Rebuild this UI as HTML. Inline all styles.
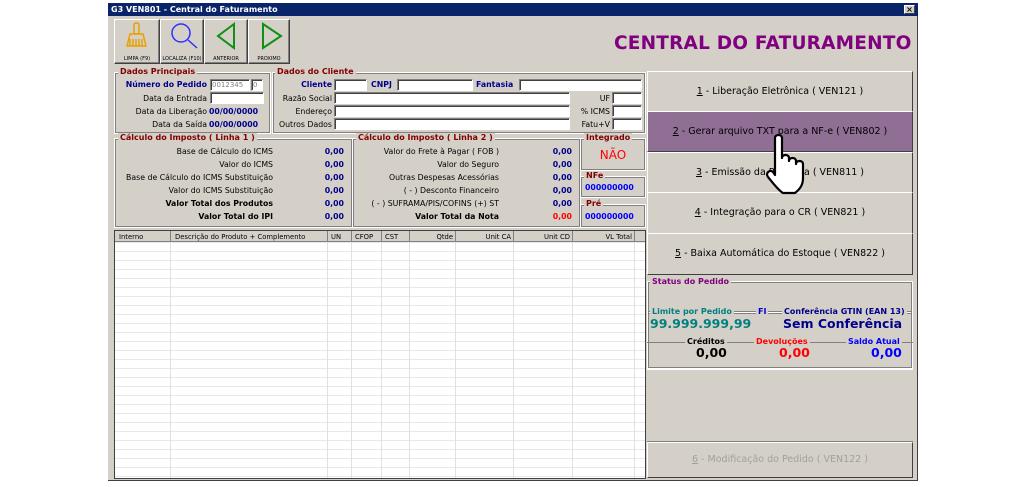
<!DOCTYPE html><html><head><meta charset="utf-8"><style>
*{margin:0;padding:0;box-sizing:border-box}
body{width:1025px;height:487px;background:#fff;position:relative;overflow:hidden;font-family:"DejaVu Sans","Liberation Sans",sans-serif;font-size:8px;color:#000}
.a{position:absolute}
.win{left:108px;top:3px;width:810px;height:478px;background:#d4d0c8;border-right:1px solid #404040;border-bottom:1px solid #404040}
.tb{left:108px;top:3px;width:810px;height:13px;background:#0a246a;color:#fff;font-weight:bold;font-size:8px;line-height:13px;padding-left:3px}
.btn{background:#d4d0c8;border:1px solid;border-color:#fff #404040 #404040 #fff;box-shadow:inset -1px -1px #808080}
.gb{border:1px solid #fff;outline:1px solid #808080;outline-offset:-2px}
.gl{background:#d4d0c8;font-weight:bold;padding:0 2px;font-size:8px;line-height:9px}
.r{text-align:right}
.in{background:#fff;border:1px solid #808080;border-right-color:#fff;border-bottom-color:#fff;box-shadow:inset 1px 1px #404040}
.lbl{font-size:7.8px;line-height:10px;white-space:nowrap}
.v{font-weight:bold;color:#00008b}
.rb{background:#d4d0c8;border:1px solid;border-color:#fff #404040 #404040 #fff;font-size:9.5px;color:#000;text-align:center;font-family:"DejaVu Sans",sans-serif}
</style></head><body>
<div class="a win"></div>
<div class="a tb">G3 VEN801 - Central do Faturamento</div>
<div class="a" style="left:904px;top:5px;width:11px;height:9px;background:#d4d0c8;border:1px solid;border-color:#fff #404040 #404040 #fff;font-size:8px;line-height:7px;text-align:center;font-weight:bold">×</div>

<!-- toolbar -->
<div class="a btn" style="left:114px;top:19px;width:46px;height:45px"></div>
<div class="a btn" style="left:160px;top:19px;width:44px;height:45px"></div>
<div class="a btn" style="left:204px;top:19px;width:44px;height:45px"></div>
<div class="a btn" style="left:248px;top:19px;width:42px;height:45px"></div>
<svg class="a" style="left:114px;top:19px" width="176" height="45">
<g fill="none" stroke="#e8a000" stroke-width="1.5"><rect x="20" y="4" width="5" height="11" rx="2"/><path d="M16 15h13l3 12H13z"/><path d="M16 20v7M19 20v7M22 20v7M25 20v7M28 20v7"/></g>
<circle cx="67" cy="14" r="9" fill="none" stroke="#3030ff" stroke-width="1.5"/><path d="M74 21l9 8" stroke="#3030ff" stroke-width="1.5"/>
<path d="M120 5L104 17L120 29Z" fill="none" stroke="#109010" stroke-width="2"/>
<path d="M149 5L167 17L149 29Z" fill="none" stroke="#109010" stroke-width="2"/>
<g font-size="5" font-family="DejaVu Sans" text-anchor="middle"><text x="23" y="41">LIMPA (F9)</text><text x="68" y="41">LOCALIZA (F10)</text><text x="112" y="41">ANTERIOR</text><text x="155" y="41">PROXIMO</text></g>
</svg>
<div class="a" style="left:614px;top:33px;font-size:18.5px;font-weight:bold;color:#800080;font-family:'DejaVu Sans',sans-serif;letter-spacing:0.2px">CENTRAL DO FATURAMENTO</div>

<!-- Dados Principais -->
<div class="a gb" style="left:114px;top:72px;width:157px;height:62px"></div>
<div class="a gl" style="left:118px;top:67px;color:#800000">Dados Principais</div>
<div class="a lbl r v" style="left:110px;top:80px;width:97px">Número do Pedido</div>
<div class="a in" style="left:210px;top:79px;width:40px;height:12px;font-size:7px;color:#808080;padding-left:1px;line-height:10px">0012345</div>
<div class="a in" style="left:251px;top:79px;width:12px;height:12px;font-size:7px;color:#808080;padding-left:1px;line-height:10px">0</div>
<div class="a lbl r" style="left:110px;top:94px;width:97px">Data da Entrada</div>
<div class="a in" style="left:210px;top:92px;width:54px;height:12px"></div>
<div class="a lbl r" style="left:110px;top:107px;width:97px">Data da Liberação</div>
<div class="a lbl v" style="left:209px;top:107px">00/00/0000</div>
<div class="a lbl r" style="left:110px;top:120px;width:97px">Data da Saída</div>
<div class="a lbl v" style="left:209px;top:120px">00/00/0000</div>

<!-- Dados do Cliente -->
<div class="a gb" style="left:272px;top:72px;width:374px;height:62px"></div>
<div class="a gl" style="left:275px;top:67px;color:#800000">Dados do Cliente</div>
<div class="a lbl r v" style="left:272px;top:80px;width:60px">Cliente</div>
<div class="a in" style="left:334px;top:79px;width:33px;height:12px"></div>
<div class="a lbl v" style="left:371px;top:80px">CNPJ</div>
<div class="a in" style="left:397px;top:79px;width:76px;height:12px"></div>
<div class="a lbl v" style="left:476px;top:80px">Fantasia</div>
<div class="a in" style="left:519px;top:79px;width:123px;height:12px"></div>
<div class="a lbl r" style="left:272px;top:94px;width:60px">Razão Social</div>
<div class="a in" style="left:334px;top:92px;width:236px;height:12px"></div>
<div class="a lbl r" style="left:272px;top:107px;width:60px">Endereço</div>
<div class="a in" style="left:334px;top:105px;width:236px;height:12px"></div>
<div class="a lbl r" style="left:272px;top:120px;width:60px">Outros Dados</div>
<div class="a in" style="left:334px;top:118px;width:236px;height:12px"></div>
<div class="a lbl r" style="left:570px;top:94px;width:40px">UF</div>
<div class="a in" style="left:612px;top:92px;width:30px;height:12px"></div>
<div class="a lbl r" style="left:570px;top:107px;width:40px">% ICMS</div>
<div class="a in" style="left:612px;top:105px;width:30px;height:12px"></div>
<div class="a lbl r" style="left:570px;top:120px;width:40px">Fatu+V</div>
<div class="a in" style="left:612px;top:118px;width:30px;height:12px"></div>

<!-- Calculo 1 -->
<div class="a gb" style="left:114px;top:138px;width:239px;height:90px"></div>
<div class="a gl" style="left:118px;top:133px;color:#800000">Cálculo do Imposto ( Linha 1 )</div>
<div class="a lbl r" style="left:110px;top:147px;width:163px">Base de Cálculo do ICMS</div>
<div class="a lbl r" style="left:110px;top:160px;width:163px">Valor do ICMS</div>
<div class="a lbl r" style="left:110px;top:173px;width:163px">Base de Cálculo do ICMS Substituição</div>
<div class="a lbl r" style="left:110px;top:186px;width:163px">Valor do ICMS Substituição</div>
<div class="a lbl r" style="left:110px;top:199px;width:163px;font-weight:bold">Valor Total dos Produtos</div>
<div class="a lbl r" style="left:110px;top:212px;width:163px;font-weight:bold">Valor Total do IPI</div>
<div class="a lbl r v" style="left:300px;top:147px;width:44px">0,00</div>
<div class="a lbl r v" style="left:300px;top:160px;width:44px">0,00</div>
<div class="a lbl r v" style="left:300px;top:173px;width:44px">0,00</div>
<div class="a lbl r v" style="left:300px;top:186px;width:44px">0,00</div>
<div class="a lbl r v" style="left:300px;top:199px;width:44px">0,00</div>
<div class="a lbl r v" style="left:300px;top:212px;width:44px">0,00</div>

<!-- Calculo 2 -->
<div class="a gb" style="left:352px;top:138px;width:229px;height:90px"></div>
<div class="a gl" style="left:356px;top:133px;color:#800000">Cálculo do Imposto ( Linha 2 )</div>
<div class="a lbl r" style="left:346px;top:147px;width:153px">Valor do Frete à Pagar ( FOB )</div>
<div class="a lbl r" style="left:346px;top:160px;width:153px">Valor do Seguro</div>
<div class="a lbl r" style="left:346px;top:173px;width:153px">Outras Despesas Acessórias</div>
<div class="a lbl r" style="left:346px;top:186px;width:153px">( - ) Desconto Financeiro</div>
<div class="a lbl r" style="left:346px;top:199px;width:153px">( - ) SUFRAMA/PIS/COFINS (+) ST</div>
<div class="a lbl r" style="left:346px;top:212px;width:153px;font-weight:bold">Valor Total da Nota</div>
<div class="a lbl r v" style="left:529px;top:147px;width:43px">0,00</div>
<div class="a lbl r v" style="left:529px;top:160px;width:43px">0,00</div>
<div class="a lbl r v" style="left:529px;top:173px;width:43px">0,00</div>
<div class="a lbl r v" style="left:529px;top:186px;width:43px">0,00</div>
<div class="a lbl r v" style="left:529px;top:199px;width:43px">0,00</div>
<div class="a lbl r v" style="left:529px;top:212px;width:43px;color:#f00">0,00</div>

<!-- Integrado -->
<div class="a gb" style="left:580px;top:138px;width:66px;height:33px"></div>
<div class="a gl" style="left:584px;top:133px;color:#800000">Integrado</div>
<div class="a" style="left:580px;top:148px;width:66px;text-align:center;color:#f00;font-size:12px">NÃO</div>
<div class="a gb" style="left:580px;top:176px;width:66px;height:22px"></div>
<div class="a gl" style="left:584px;top:171px;color:#800000">NFe</div>
<div class="a lbl v" style="left:585px;top:183px;color:#0000ff">000000000</div>
<div class="a gb" style="left:580px;top:204px;width:66px;height:24px"></div>
<div class="a gl" style="left:584px;top:199px;color:#800000">Pré</div>
<div class="a lbl v" style="left:585px;top:212px;color:#0000ff">000000000</div>

<!-- grid -->
<div class="a" style="left:114px;top:230px;width:532px;height:249px;background:#fff;border:1px solid #404040;
background-image:linear-gradient(#e8e8e8 1px,transparent 1px);background-size:100% 9px;background-position:0 11px"></div>
<svg class="a" style="left:115px;top:231px" width="530" height="247">
<rect width="530" height="11" fill="#d4d0c8"/>
<g stroke="#e0e0e0"><path d="M55.5 11V247M212.5 11V247M236.5 11V247M266.5 11V247M294.5 11V247M340.5 11V247M398.5 11V247M457.5 11V247M519.5 11V247"/></g>
<g stroke="#808080"><path d="M55.5 0V11M212.5 0V11M236.5 0V11M266.5 0V11M294.5 0V11M340.5 0V11M398.5 0V11M457.5 0V11M519.5 0V11M0 10.5H530"/></g>
<g font-size="6.8" font-family="DejaVu Sans"><text x="4" y="8">Interno</text><text x="60" y="8">Descrição do Produto + Complemento</text><text x="216" y="8">UN</text><text x="240" y="8">CFOP</text><text x="270" y="8">CST</text>
<g text-anchor="end"><text x="338" y="8">Qtde</text><text x="396" y="8">Unit CA</text><text x="455" y="8">Unit CD</text><text x="517" y="8">VL Total</text></g></g>
</svg>

<!-- right buttons -->
<div class="a rb" style="left:647px;top:71px;width:266px;height:41px;line-height:39px"><u>1</u> - Liberação Eletrônica ( VEN121 )</div>
<div class="a rb" style="left:647px;top:111px;width:266px;height:41px;line-height:39px;background:#8f6f94"><u>2</u> - Gerar arquivo TXT para a NF-e ( VEN802 )</div>
<div class="a rb" style="left:647px;top:152px;width:266px;height:41px;line-height:39px"><u>3</u> - Emissão da Pré-Nota ( VEN811 )</div>
<div class="a rb" style="left:647px;top:192px;width:266px;height:42px;line-height:40px"><u>4</u> - Integração para o CR ( VEN821 )</div>
<div class="a rb" style="left:647px;top:233px;width:266px;height:42px;line-height:40px"><u>5</u> - Baixa Automática do Estoque ( VEN822 )</div>
<!-- hand cursor -->
<svg class="a" style="left:765px;top:134px" width="50" height="62"><path d="M10 4c0-4 7-4 7 0v20c0-4 7-4 7 0v3c0-4 7-4 7 0v3c0-4 7-4 7 0v14c0 7-3 11-8 15H18C13 56 8 49 3 43c-3-4 2-8 5-5l2 3z" fill="#fff" stroke="#000" stroke-width="2.2" stroke-linejoin="round"/></svg>

<!-- status -->
<div class="a gb" style="left:647px;top:281px;width:266px;height:88px"></div>
<div class="a gl" style="left:650px;top:277px;color:#800080">Status do Pedido</div>
<div class="a" style="left:647px;top:312px;width:266px;border-top:1px solid #fff;outline:1px solid #808080;outline-offset:-2px;height:1px"></div>
<div class="a gl" style="left:650px;top:307px;color:#008080">Limite por Pedido</div>
<div class="a gl" style="left:756px;top:307px;color:#0000cd">FI</div>
<div class="a gl" style="left:782px;top:307px;color:#00008b">Conferência GTIN (EAN 13)</div>
<div class="a" style="left:650px;top:316px;font-size:12.5px;font-weight:bold;color:#008080">99.999.999,99</div>
<div class="a" style="left:783px;top:316px;font-size:12.5px;font-weight:bold;color:#00008b">Sem Conferência</div>
<div class="a" style="left:647px;top:342px;width:266px;border-top:1px solid #808080;height:1px"></div>
<div class="a gl" style="left:685px;top:337px">Créditos</div>
<div class="a gl" style="left:754px;top:337px;color:#f00">Devoluções</div>
<div class="a gl" style="left:846px;top:337px;color:#0000ff">Saldo Atual</div>
<div class="a" style="left:696px;top:345px;font-size:12.5px;font-weight:bold">0,00</div>
<div class="a" style="left:779px;top:345px;font-size:12.5px;font-weight:bold;color:#f00">0,00</div>
<div class="a" style="left:871px;top:345px;font-size:12.5px;font-weight:bold;color:#0000ff">0,00</div>
<div class="a" style="left:647px;top:369px;width:266px;height:73px;border-top:1px solid #fff;border-bottom:1px solid #808080"></div>
<div class="a rb" style="left:647px;top:442px;width:266px;height:36px;line-height:34px;color:#a0a0a0"><u>6</u> - Modificação do Pedido ( VEN122 )</div>
</body></html>
